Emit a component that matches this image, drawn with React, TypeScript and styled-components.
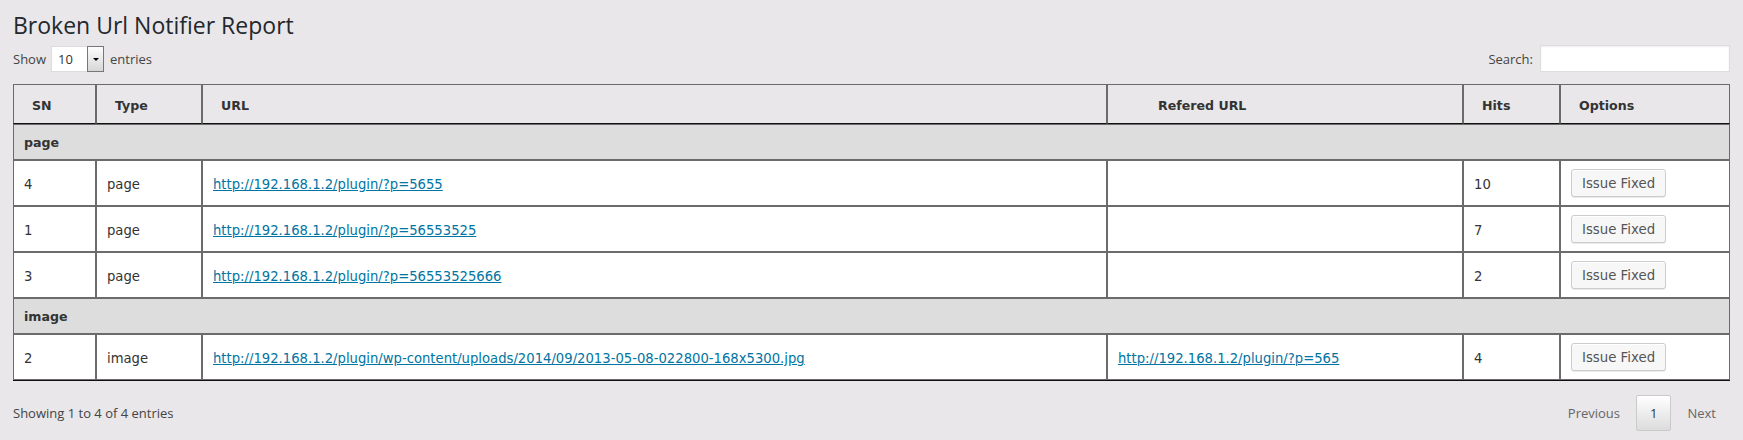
import React from "react";
import styled, { createGlobalStyle } from "styled-components";

const GlobalStyle = createGlobalStyle`
  html, body {
    margin: 0;
    padding: 0;
    background: #e9e7ea;
  }
  body {
    font-family: "Open Sans", "Liberation Sans", sans-serif;
    font-size: 13px;
    line-height: 18px;
    color: #444;
  }
  * { box-sizing: border-box; }
`;

const Wrap = styled.div`
  padding: 0 13px;
`;

const Title = styled.h2`
  margin: 0;
  padding-top: 11px;
  font-family: "Open Sans", "Liberation Sans", sans-serif;
  font-size: 23px;
  font-weight: 400;
  line-height: 29px;
  color: #23282d;
`;

const Controls = styled.div`
  display: flex;
  justify-content: space-between;
  align-items: center;
  height: 27px;
  margin-top: 5px;
`;

const LengthLabel = styled.label`
  display: flex;
  align-items: center;
  color: #444;
`;

const FakeSelect = styled.div`
  display: flex;
  width: 53px;
  height: 26px;
  margin: 1px 6px 0 5px;
`;

const SelectValue = styled.div`
  flex: 1;
  background: #fff;
  border: 1px solid #dcdcdc;
  border-right: none;
  padding-left: 6px;
  line-height: 24px;
  font-size: 13px;
  color: #333;
`;

const SelectArrow = styled.div`
  width: 17px;
  height: 26px;
  border: 1px solid #777;
  background: linear-gradient(to bottom, #fdfdfd 0%, #d6d6d6 100%);
  display: flex;
  align-items: center;
  justify-content: center;
  &::after {
    content: "";
    display: block;
    border-left: 3px solid transparent;
    border-right: 3px solid transparent;
    border-top: 3px solid #000;
  }
`;

const SearchLabel = styled.label`
  display: flex;
  align-items: center;
  color: #444;
`;

const SearchInput = styled.input`
  width: 190px;
  height: 27px;
  margin-left: 7px;
  border: 1px solid #ddd;
  background: #fff;
  box-shadow: inset 0 1px 2px rgba(0, 0, 0, 0.07);
  outline: none;
  padding: 0 6px;
  font-family: "Open Sans", sans-serif;
  font-size: 13px;
`;

const Table = styled.table`
  width: 100%;
  margin-top: 12px;
  border-collapse: separate;
  border-spacing: 0;
  table-layout: fixed;
  border-bottom: 1px solid #111;
  font-family: "DejaVu Sans", Verdana, sans-serif;
  color: #333;
`;

const Th = styled.th<{ $w: number; $pl?: number }>`
  width: ${(p) => p.$w}px;
  border: 1px solid #6b6b6b;
  border-bottom-color: #111;
  padding: 12px 18px 8px ${(p) => p.$pl ?? 18}px;
  text-align: left;
  font-weight: bold;
  font-size: 12.6px;
  line-height: 18px;
  color: #333;
`;

const Td = styled.td`
  border: 1px solid #6b6b6b;
  padding: 15px 10px 8px;
  background: #fff;
  font-size: 13.2px;
  line-height: 18px;
  vertical-align: top;
  white-space: nowrap;
`;

const ActionTd = styled(Td)`
  padding: 8px 10px;
`;

const GroupTd = styled.td`
  border: 1px solid #6b6b6b;
  padding: 9px 10px 7px;
  background: #ddd;
  font-weight: bold;
  font-size: 12.6px;
  line-height: 18px;
  color: #333;
`;

const Link = styled.a`
  color: #0074a2;
  text-decoration: underline;
`;

const FixButton = styled.button`
  display: inline-block;
  height: 28px;
  line-height: 26px;
  padding: 1px 10px 0;
  margin: 0;
  font-family: "DejaVu Sans", Verdana, sans-serif;
  font-size: 13.3px;
  color: #555;
  border: 1px solid #ccc;
  border-radius: 3px;
  background: #f7f7f7;
  box-shadow: inset 0 1px 0 #fff, 0 1px 0 rgba(0, 0, 0, 0.08);
  white-space: nowrap;
  cursor: pointer;
`;

const Footer = styled.div`
  display: flex;
  justify-content: space-between;
  align-items: center;
  margin-top: 14px;
`;

const Info = styled.div`
  color: #444;
`;

const Paginate = styled.div`
  display: flex;
`;

const PageButton = styled.span<{ $current?: boolean }>`
  display: inline-block;
  margin-left: 2px;
  padding: 8px 13px;
  line-height: 18px;
  border: 1px solid ${(p) => (p.$current ? "#cacaca" : "transparent")};
  border-radius: 2px;
  color: ${(p) => (p.$current ? "#333" : "#666")};
  background: ${(p) =>
    p.$current ? "linear-gradient(to bottom, #fff 0%, #dcdcdc 100%)" : "transparent"};
  cursor: default;
`;

type Row = { sn: string; type: string; url: string; ref: string; hits: string };

const groups: { name: string; rows: Row[] }[] = [
  {
    name: "page",
    rows: [
      { sn: "4", type: "page", url: "http://192.168.1.2/plugin/?p=5655", ref: "", hits: "10" },
      { sn: "1", type: "page", url: "http://192.168.1.2/plugin/?p=56553525", ref: "", hits: "7" },
      { sn: "3", type: "page", url: "http://192.168.1.2/plugin/?p=56553525666", ref: "", hits: "2" },
    ],
  },
  {
    name: "image",
    rows: [
      {
        sn: "2",
        type: "image",
        url: "http://192.168.1.2/plugin/wp-content/uploads/2014/09/2013-05-08-022800-168x5300.jpg",
        ref: "http://192.168.1.2/plugin/?p=565",
        hits: "4",
      },
    ],
  },
];

export default function App() {
  return (
    <>
      <GlobalStyle />
      <Wrap>
        <Title>Broken Url Notifier Report</Title>
        <Controls>
          <LengthLabel>
            Show
            <FakeSelect>
              <SelectValue>10</SelectValue>
              <SelectArrow />
            </FakeSelect>
            entries
          </LengthLabel>
          <SearchLabel>
            Search:
            <SearchInput type="search" />
          </SearchLabel>
        </Controls>
        <Table>
          <thead>
            <tr>
              <Th $w={83}>SN</Th>
              <Th $w={106}>Type</Th>
              <Th $w={905}>URL</Th>
              <Th $w={356} $pl={50}>Refered URL</Th>
              <Th $w={97}>Hits</Th>
              <Th $w={170}>Options</Th>
            </tr>
          </thead>
          <tbody>
            {groups.map((g) => (
              <React.Fragment key={g.name}>
                <tr>
                  <GroupTd colSpan={6}>{g.name}</GroupTd>
                </tr>
                {g.rows.map((r) => (
                  <tr key={r.sn}>
                    <Td>{r.sn}</Td>
                    <Td>{r.type}</Td>
                    <Td>
                      <Link href="#">{r.url}</Link>
                    </Td>
                    <Td>{r.ref && <Link href="#">{r.ref}</Link>}</Td>
                    <Td>{r.hits}</Td>
                    <ActionTd>
                      <FixButton type="button">Issue Fixed</FixButton>
                    </ActionTd>
                  </tr>
                ))}
              </React.Fragment>
            ))}
          </tbody>
        </Table>
        <Footer>
          <Info>Showing 1 to 4 of 4 entries</Info>
          <Paginate>
            <PageButton>Previous</PageButton>
            <PageButton $current>1</PageButton>
            <PageButton>Next</PageButton>
          </Paginate>
        </Footer>
      </Wrap>
    </>
  );
}
